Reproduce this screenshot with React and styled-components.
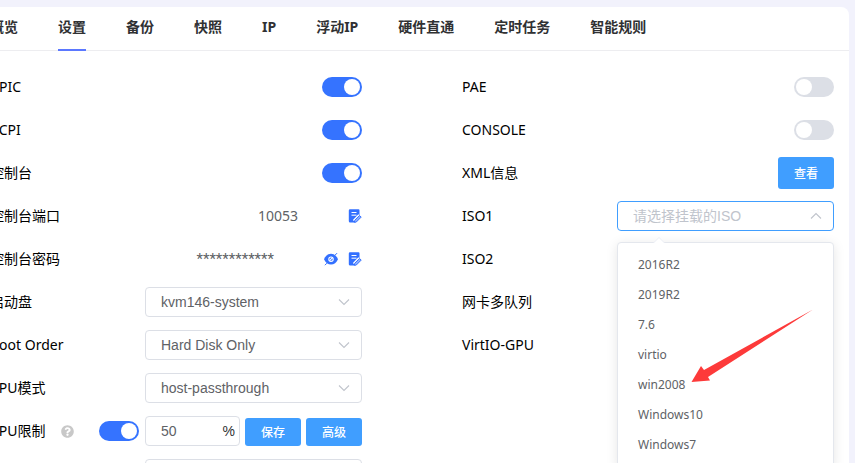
import React, { useState } from "react";
import styled, { createGlobalStyle } from "styled-components";
import { FaQuestionCircle } from "react-icons/fa";

const tabs = [
  "概览",
  "设置",
  "备份",
  "快照",
  "IP",
  "浮动IP",
  "硬件直通",
  "定时任务",
  "智能规则",
];

const isoList = [
  "2016R2",
  "2019R2",
  "7.6",
  "virtio",
  "win2008",
  "Windows10",
  "Windows7",
];

const Chevron = () => (
  <svg width="12" height="8" viewBox="0 0 12 8" fill="none">
    <path d="M1 1.5l5 5 5-5" stroke="#c0c4cc" strokeWidth="1.1" />
  </svg>
);

const EditIcon = () => (
  <svg width="14" height="14" viewBox="0 0 14 14">
    <path
      d="M2 .3h8.500a1 1 0 0 1 1 1v4.500L6 13.500H2.200A1.400 1.400 0 0 1 .8 12V1.500A1.200 1.200 0 0 1 2 .3z"
      fill="#3370ff"
    />
    <path d="M3.500 3.500h5M3.500 6.200h5" stroke="#fff" strokeWidth="1" />
    <path d="M6.300 12.300l5.500-5.700" stroke="#fff" strokeWidth="4" />
    <path
      d="M6.300 13.400l.4-2 4.900-4.900 1.600 1.600-4.900 4.900z"
      fill="#8fb0ff"
      stroke="#3370ff"
      strokeWidth="1"
    />
  </svg>
);

const EyeIcon = () => (
  <svg width="14" height="14" viewBox="0 0 14 14">
    <path
      d="M0 7.200C1.500 3.800 4 1.800 7 1.800s5.500 2 7 5.400c-1.500 3.400-4 5.400-7 5.400s-5.500-2-7-5.400z"
      fill="#3370ff"
    />
    <circle cx="7" cy="7.200" r="2.200" fill="none" stroke="#fff" strokeWidth="1.100" />
    <path d="M5.500 8.700l3-3" stroke="#fff" strokeWidth="1.100" />
    <path d="M.9 13.200l2-2M11.200 3l1.900-1.900" stroke="#3370ff" strokeWidth="1" />
  </svg>
);

const Toggle = ({ id, label, on }) => {
  const [checked, setChecked] = useState(Boolean(on));
  return (
    <Switch
      id={id}
      aria-label={label}
      checked={checked}
      onChange={() => setChecked(!checked)}
    />
  );
};

const SelectBox = ({ id, label, value }) => (
  <SelectWrap>
    <Select id={id} aria-label={label}>
      <option>{value}</option>
    </Select>
    <Caret>
      <Chevron />
    </Caret>
  </SelectWrap>
);

const IsoSelect = () => {
  const [iso, setIso] = useState("");
  return (
    <SelectWrap>
      <Select
        id="iso1"
        $active
        $empty={!iso}
        value={iso}
        onChange={(e) => setIso(e.target.value)}
      >
        <option value="">请选择挂载的ISO</option>
        {isoList.map((name) => (
          <option key={name}>{name}</option>
        ))}
      </Select>
      <Caret $up>
        <Chevron />
      </Caret>
      <Dropdown>
        {isoList.map((name) => (
          <li key={name}>
            <Option type="button" onClick={() => setIso(name)}>
              {name}
            </Option>
          </li>
        ))}
        <Pointer viewBox="0 0 124 76" aria-hidden="true">
          <path
            d="M1.500 74L11 58l3 4L123 1.500 18 69l2 3.500z"
            fill="#fd3a3a"
          />
        </Pointer>
      </Dropdown>
    </SelectWrap>
  );
};

const App = () => {
  const [active, setActive] = useState("设置");

  return (
    <>
      <GlobalStyle />
      <Card>
        <TabBar role="tablist">
          {tabs.map((tab) => (
            <Tab
              key={tab}
              type="button"
              role="tab"
              aria-selected={tab === active}
              $active={tab === active}
              onClick={() => setActive(tab)}
            >
              {tab}
            </Tab>
          ))}
        </TabBar>
        <Columns>
          <Column>
            <Row>
              <Label htmlFor="apic">APIC</Label>
              <Toggle id="apic" on />
            </Row>
            <Row>
              <Label htmlFor="acpi">ACPI</Label>
              <Toggle id="acpi" on />
            </Row>
            <Row>
              <Label htmlFor="console-on">控制台</Label>
              <Toggle id="console-on" on />
            </Row>
            <Row>
              <Label as="span">控制台端口</Label>
              <ValueGroup>
                <Value>10053</Value>
                <IconButton type="button" aria-label="修改端口">
                  <EditIcon />
                </IconButton>
              </ValueGroup>
            </Row>
            <Row>
              <Label as="span">控制台密码</Label>
              <ValueGroup>
                <Value $masked>************</Value>
                <IconButton type="button" aria-label="显示密码">
                  <EyeIcon />
                </IconButton>
                <IconButton type="button" aria-label="修改密码">
                  <EditIcon />
                </IconButton>
              </ValueGroup>
            </Row>
            <Row>
              <Label htmlFor="boot-disk">启动盘</Label>
              <SelectBox id="boot-disk" value="kvm146-system" />
            </Row>
            <Row>
              <Label htmlFor="boot-order">Boot Order</Label>
              <SelectBox id="boot-order" value="Hard Disk Only" />
            </Row>
            <Row>
              <Label htmlFor="cpu-mode">CPU模式</Label>
              <SelectBox id="cpu-mode" value="host-passthrough" />
            </Row>
            <Row>
              <LabelGroup>
                <Label htmlFor="cpu-limit">CPU限制</Label>
                <FaQuestionCircle size={13} color="#c8c8c8" />
              </LabelGroup>
              <LimitGroup>
                <Toggle label="启用CPU限制" on />
                <PercentBox>
                  <Input id="cpu-limit" defaultValue="50" />%
                </PercentBox>
                <Button type="button" $small>
                  保存
                </Button>
                <Button type="button" $small>
                  高级
                </Button>
              </LimitGroup>
            </Row>
            <Row>
              <span />
              <SelectBox label="CPU" value="" />
            </Row>
          </Column>
          <Column>
            <Row>
              <Label htmlFor="pae">PAE</Label>
              <Toggle id="pae" />
            </Row>
            <Row>
              <Label htmlFor="console">CONSOLE</Label>
              <Toggle id="console" />
            </Row>
            <Row>
              <Label as="span">XML信息</Label>
              <Button type="button">查看</Button>
            </Row>
            <Row>
              <Label htmlFor="iso1">ISO1</Label>
              <IsoSelect />
            </Row>
            <Row>
              <Label as="span">ISO2</Label>
            </Row>
            <Row>
              <Label as="span">网卡多队列</Label>
            </Row>
            <Row>
              <Label as="span">VirtIO-GPU</Label>
            </Row>
          </Column>
        </Columns>
      </Card>
    </>
  );
};

export default App;

const GlobalStyle = createGlobalStyle`
  * {
    box-sizing: border-box;
  }

  body {
    margin: 0;
    overflow: hidden;
    background-color: #f2f2fc;
    font-family: "Noto Sans", "Noto Sans CJK SC", sans-serif;
    font-size: 14px;
    color: #000;
  }

  #root {
    height: 100vh;
    overflow: hidden;
  }

  button, input, select {
    font-family: inherit;
  }
`;

/* the left edge of the card runs out under the window edge */
const Card = styled.main`
  margin: 7px 6px 0 -25px;
  min-height: 100vh;
  background-color: #fff;
  border-radius: 8px;
`;

const TabBar = styled.div`
  display: flex;
  column-gap: 40px;
  height: 44px;
  padding: 0 15px;
  border-bottom: 1px solid #ededf0;
`;

const Tab = styled.button`
  height: 44px;
  padding: 0 0 2px;
  border: 0;
  border-bottom: 2px solid ${(p) => (p.$active ? "#5b78ff" : "transparent")};
  background: none;
  color: #303133;
  font-size: 14px;
  font-weight: 700;
  line-height: 40px;
  white-space: nowrap;
  cursor: pointer;
`;

const Columns = styled.div`
  display: grid;
  grid-template-columns: 1fr 1fr;
  column-gap: 100px;
  padding: 21px 15px;
`;

const Column = styled.div`
  display: flex;
  flex-direction: column;
  row-gap: 13px;
`;

const Row = styled.div`
  display: flex;
  align-items: center;
  justify-content: space-between;
  height: 30px;
`;

const Label = styled.label`
  line-height: 30px;
  white-space: nowrap;
`;

const LabelGroup = styled.div`
  display: flex;
  align-items: center;
  column-gap: 15px;
`;

const Switch = styled.input.attrs({ type: "checkbox", role: "switch" })`
  appearance: none;
  flex: none;
  display: flex;
  align-items: center;
  justify-content: ${(p) => (p.checked ? "flex-end" : "flex-start")};
  width: 40px;
  height: 20px;
  margin: 0;
  padding: 0 2px;
  border-radius: 10px;
  background-color: ${(p) => (p.checked ? "#3573ff" : "#dcdfe6")};
  cursor: pointer;

  &::before {
    content: "";
    width: 16px;
    height: 16px;
    border-radius: 50%;
    background-color: #fff;
  }
`;

const ValueGroup = styled.div`
  display: flex;
  align-items: center;
  column-gap: 10px;
`;

const Value = styled.span`
  margin-right: 40px;
  color: #606266;
  font-family: ${(p) => (p.$masked ? "Roboto, sans-serif" : "inherit")};
  font-size: ${(p) => (p.$masked ? "15px" : "14px")};
  line-height: 30px;
`;

const IconButton = styled.button`
  display: flex;
  padding: 0;
  border: 0;
  background: none;
  cursor: pointer;
`;

const SelectWrap = styled.div`
  position: relative;
  width: 217px;
`;

const Select = styled.select`
  appearance: none;
  display: block;
  width: 100%;
  height: 30px;
  padding: 0 30px 0 15px;
  border: 1px solid ${(p) => (p.$active ? "#409eff" : "#dcdfe6")};
  border-radius: 4px;
  background-color: #fff;
  color: ${(p) => (p.$empty ? "#c0c4cc" : "#606266")};
  font-family: "Liberation Sans", "Noto Sans CJK SC", sans-serif;
  font-size: 14px;
`;

const Caret = styled.span`
  position: absolute;
  top: 0;
  right: 12px;
  display: flex;
  align-items: center;
  height: 30px;
  pointer-events: none;
  transform: ${(p) => (p.$up ? "rotate(180deg)" : "none")};
`;

const Dropdown = styled.ul`
  position: absolute;
  top: 41px;
  left: 0;
  z-index: 1;
  width: 100%;
  margin: 0;
  padding: 7px 0;
  border: 1px solid #e4e7ed;
  border-radius: 4px;
  background-color: #fff;
  box-shadow: 0 2px 12px rgba(0, 0, 0, 0.1);
  list-style: none;

  &::before,
  &::after {
    content: "";
    position: absolute;
    top: -6px;
    left: 35px;
    border: 6px solid transparent;
    border-top: 0;
    border-bottom-color: #ebeef5;
  }

  &::after {
    top: -5px;
    border-bottom-color: #fff;
  }
`;

const Option = styled.button`
  display: block;
  width: 100%;
  height: 30px;
  padding: 0 20px;
  border: 0;
  background: none;
  color: #606266;
  font-size: 12px;
  line-height: 30px;
  text-align: left;
  cursor: pointer;

  &:hover {
    background-color: #f5f7fa;
  }
`;

const Pointer = styled.svg`
  position: absolute;
  top: 65px;
  left: 72px;
  width: 124px;
  height: 76px;
  pointer-events: none;
`;

const LimitGroup = styled.div`
  display: flex;
  align-items: flex-end;
  column-gap: 5px;

  ${Switch} {
    align-self: center;
    margin-right: 1px;
  }
`;

const PercentBox = styled.div`
  display: flex;
  align-items: center;
  width: 95px;
  height: 30px;
  padding: 0 4px 0 15px;
  border: 1px solid #dcdfe6;
  border-radius: 4px;
  color: #303133;
  font-family: "Liberation Sans", sans-serif;
`;

const Input = styled.input`
  flex: 1;
  min-width: 0;
  padding: 0;
  border: 0;
  outline: 0;
  color: #606266;
  font-family: inherit;
  font-size: 14px;
`;

const Button = styled.button`
  flex: none;
  height: ${(p) => (p.$small ? "28px" : "32px")};
  padding: 0 16px;
  border: 0;
  border-radius: 3px;
  background-color: #409eff;
  color: #fff;
  font-size: 12px;
  font-weight: 500;
  cursor: pointer;
`;
